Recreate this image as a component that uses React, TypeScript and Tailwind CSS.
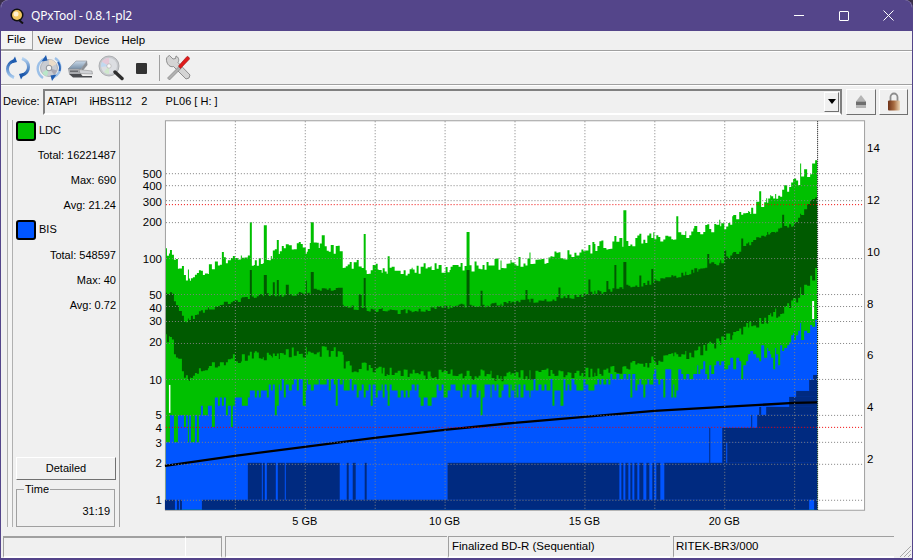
const FONT = "font-['Liberation_Sans','Arial',sans-serif]";

function rng(seed: number) {
  let a = seed;
  return () => {
    a |= 0; a = (a + 0x6d2b79f5) | 0;
    let t = Math.imul(a ^ (a >>> 15), 1 | a);
    t = (t + Math.imul(t ^ (t >>> 7), 61 | t)) ^ t;
    return ((t ^ (t >>> 14)) >>> 0) / 4294967296;
  };
}
const interp = (pts: number[][], x: number) => {
  for (let i = 1; i < pts.length; i++) {
    if (x <= pts[i][0]) {
      const [x0, y0] = pts[i - 1], [x1, y1] = pts[i];
      return y0 + ((y1 - y0) * (x - x0)) / (x1 - x0 || 1);
    }
  }
  return pts[pts.length - 1][1];
};
const ly = (v: number) => 500 - Math.log10(v) * 121;

const envA = [[165,258],[172,260],[185,282],[200,278],[230,266],[260,266],[290,254],[341,254],[343,273],[400,277],[445,273],[500,270],[550,264],[600,252],[650,244],[700,236],[725,230],[760,212],[795,190],[808,178],[818,166]];
const envB = [[165,292],[170,292],[185,322],[200,312],[235,300],[270,295],[290,295],[341,287],[343,307],[400,312],[445,307],[500,304],[570,297],[640,285],[690,272],[725,260],[760,237],[795,224],[812,200],[818,195]];
const envC = [[165,337],[172,345],[185,378],[200,372],[230,358],[290,353],[341,352],[345,366],[400,372],[500,376],[600,372],[700,352],[760,322],[790,306],[815,276],[818,266]];
const envD = [[165,416],[182,416],[205,405],[235,396],[280,388],[340,380],[345,386],[400,390],[500,390],[550,386],[650,378],[725,364],[780,345],[810,322],[818,308]];

const r = rng(42);
type Col = { x: number; w: number; a: number; b: number; c: number; d: number };
const cols: Col[] = [];
for (let x = 166; x < 818; ) {
  const w = r() < 0.6 ? 2 : r() < 0.5 ? 1 : 3;
  let a = interp(envA, x) - r() * 12;
  let b = interp(envB, x) + (r() - 0.5) * 5;
  const c = interp(envC, x) + (r() - 0.5) * 12;
  let dv = Math.pow(10, (500 - (interp(envD, x) + (r() - 0.4) * 16)) / 121);
  if (r() < (x < 215 ? 0.3 : 0.1)) dv *= x < 215 ? 0.6 : 0.75;
  if (r() < 0.05) b -= 12;
  if (r() < 0.02) a -= 14;
  const d = ly(Math.max(3, Math.round(dv)));
  cols.push({ x, w, a, b, c, d });
  x += w;
}
for (const [sx, top, dark] of [[251,222,270],[265,225,275],[277,240,280],[313,222,272],[365,234,278],[467,232,270],[615,236,265],[625,210,262]]) {
  const col = cols.find((k) => k.x + k.w > sx);
  if (col) { col.a = top; col.b = dark; }
}
const path = (key: "a" | "b" | "c" | "d") => {
  let s = "M166 510";
  for (const k of cols) s += `V${k[key].toFixed(1)}H${k.x + k.w}`;
  return s + "V510Z";
};
const darkRects: number[][] = [
  [165,500,10,10],[177,500,2,10],[180,500,2,10],[202,500,608,10],[815,500,3,10],
  [248,463,14,37],[263,463,2,37],[267,463,9,37],[278,463,7,37],[286,463,54,37],
  [347,463,2,37],[353,463,3,37],[365,463,2,37],[448,463,172,37],[622,463,2,37],[626,463,3,37],[631,463,2,37],[635,463,3,37],[640,463,4,37],[647,463,3,37],[653,463,2,37],[657,463,4,37],[665,463,153,37],
  [710,443,1,20],[723,443,4,20],[728,443,90,20],
  [710,428,1,15],[723,428,95,15],
  [752,415,1,13],[758,415,60,13],
  [760,407,2,8],[767,407,51,8],
  [790,397,28,10],[797,391,21,6],[810,380,8,11],[814,375,4,5],
];
const hGrid = [500,400,300,200,100,50,40,30,20,10,5,3,2,1];
const leftLabels: [string, number][] = [["500",173],["400",185.5],["300",201],["200",221],["100",258],["50",294.5],["40",307],["30",321],["20",342],["10",379.5],["5",415],["4",428],["3",442.5],["2",463],["1",500]];
const speedPts = [[165,466],[235,456],[305,447],[375,438],[445,430],[515,423],[585,417],[655,411],[725,407],[795,403],[818,402.5]];

function Chart() {
  return (
    <svg viewBox="120 0 793 418" className={`w-[792px] h-[418px] shrink-0 ${FONT}`} style={{ overflow: "hidden" }}>
      <g transform="translate(0,-117)">
        <rect x="165.5" y="120.5" width="700" height="390" fill="#fff" stroke="#a0a0a0" />
        <path d={path("a")} fill="#00c000" />
        <path d={path("b")} fill="#005a00" />
        <path d={path("c")} fill="#00c000" />
        <path d={path("d")} fill="#0055ff" />
        <rect x="169" y="385" width="1.5" height="28" fill="#fff" />
        <rect x="813" y="301" width="2" height="18" fill="#fff" />
        {darkRects.map(([x, y, w, h], i) => <rect key={i} x={x} y={y} width={w} height={h} fill="#002a80" />)}
        <polyline points={speedPts.map((p) => p.join(",")).join(" ")} fill="none" stroke="#000" strokeWidth="2.4" />
        {hGrid.map((v) => {
          const y = Math.round(ly(v)) + 0.5;
          return <line key={v} x1="166" x2="865" y1={y} y2={y} stroke="#808080" strokeDasharray="1 2" />;
        })}
        <line x1="166" x2="865" y1="204.5" y2="204.5" stroke="#f00000" strokeDasharray="1 2" />
        <line x1="166" x2="865" y1="427.5" y2="427.5" stroke="#f00000" strokeDasharray="1 2" />
        {[235,305,375,445,515,585,655,725,795].map((x) => (
          <line key={x} x1={x + 0.5} x2={x + 0.5} y1="121" y2="510" stroke="#808080" strokeDasharray="1 2" />
        ))}
        <line x1="818.5" x2="818.5" y1="121" y2="510" stroke="#000" strokeDasharray="1 1" />
        <g fontSize="11.5" fill="#000" textAnchor="end">
          {leftLabels.map(([t, y]) => <text key={t} x="162" y={y + 4.5}>{t}</text>)}
        </g>
        <g fontSize="11.5" fill="#000">
          {[["14",147],["12",199],["10",251],["8",303],["6",355],["4",407],["2",459]].map(([t, y]) => (
            <text key={t} x="868" y={(y as number) + 4.5}>{t}</text>
          ))}
        </g>
        <g fontSize="11" fill="#000" textAnchor="middle">
          {[["5 GB",305],["10 GB",445],["15 GB",585],["20 GB",725]].map(([t, x]) => (
            <text key={t} x={x} y="525">{t}</text>
          ))}
        </g>
      </g>
    </svg>
  );
}

function Refresh() {
  return (
    <svg width="26" height="26" viewBox="0 0 26 26" fill="none">
      <defs>
        <linearGradient id="rfL" x1="0" y1="0" x2="0" y2="1"><stop offset="0" stopColor="#1f5cb0" /><stop offset="1" stopColor="#a8cbef" /></linearGradient>
        <linearGradient id="rfR" x1="0" y1="0" x2="0" y2="1"><stop offset="0" stopColor="#b4d2f0" /><stop offset="1" stopColor="#1c58ac" /></linearGradient>
      </defs>
      <path d="M9 5.5C4.500 7.500 2.500 11 2.500 14c0 4 2.500 7 6.500 8.500" stroke="url(#rfL)" strokeWidth="3" />
      <path d="M17 20.500C21.500 18.500 23.500 15 23.500 12c0-4-2.500-7-6.500-8.500" stroke="url(#rfR)" strokeWidth="3" />
      <path d="M10 1.500l2 5.500-6 1.500z" fill="#1f5cb0" />
      <path d="M16 24.500l-2-5.500 6-1.500z" fill="#1c58ac" />
    </svg>
  );
}
function DiscRefresh() {
  return (
    <svg width="26" height="26" viewBox="0 0 26 26" fill="none">
      <circle cx="13" cy="13" r="8.500" fill="#c9ccd2" stroke="#9a9ea6" strokeWidth=".7" />
      <path d="M13 4.500a8.500 8.500 0 0 1 7.500 4.500L13 13z" fill="#ecdcc8" />
      <path d="M6 18a8.500 8.500 0 0 0 5 3.300L13 13z" fill="#b8e6c8" />
      <path d="M18 19.500a8.500 8.500 0 0 0 3-4L13 13z" fill="#a8a8b4" />
      <circle cx="13" cy="13" r="2.800" fill="#f4f4f4" stroke="#777b83" strokeWidth=".8" />
      <path d="M9 3.500C3.500 5.500 .8 11 2 16c.7 3 2.500 5.500 5 7" stroke="#9cc0e8" strokeWidth="2.400" />
      <path d="M17 22.500c5.500-2 8.200-7.500 7-12.500-.7-3-2.500-5.500-5-7" stroke="#9cc0e8" strokeWidth="2.400" />
      <path d="M10 0l1.500 5.500-6 1z" fill="#1f5cb0" />
      <path d="M16 26l-1.500-5.500 6-1z" fill="#1f5cb0" />
      <path d="M22 7c2 3 2.400 6 1.500 9" stroke="#2f68b8" strokeWidth="2" />
    </svg>
  );
}
function Drive() {
  return (
    <svg width="26" height="26" viewBox="0 0 26 26">
      <defs>
        <linearGradient id="drT" x1="0" y1="0" x2="0" y2="1"><stop offset="0" stopColor="#c8d8e8" /><stop offset="1" stopColor="#7890a8" /></linearGradient>
      </defs>
      <path d="M1 14 9 6h11l-6 8z" fill="url(#drT)" stroke="#8a8e94" strokeWidth=".6" />
      <path d="M1 14h13v5H2z" fill="#a8aaae" />
      <path d="M14 14l6-8 .5 4-5 6z" fill="#8a8e94" />
      <path d="M12 14.500l13 1.500.5 3-12.500-.5z" fill="#d0d2d6" stroke="#808080" strokeWidth=".5" />
      <path d="M2 19h12l1.500 2H25v1.500H6z" fill="#4a4c50" />
      <rect x="3" y="15.500" width="8" height="1.500" fill="#6a6c70" />
    </svg>
  );
}
function Magnifier() {
  return (
    <svg width="26" height="26" viewBox="0 0 26 26">
      <circle cx="11" cy="11" r="10" fill="#c6c8cc" stroke="#a0a2a6" strokeWidth=".8" />
      <circle cx="11" cy="11" r="8" fill="#dcdee2" />
      <path d="M11 3a8 8 0 0 0-7 4l7 4z" fill="#e6c8d8" />
      <path d="M4 7a8 8 0 0 0-1 5l8-1z" fill="#c0d8f0" />
      <path d="M11 11l-5 6a8 8 0 0 0 5 2z" fill="#cfe8cc" />
      <circle cx="11" cy="11" r="2.200" fill="#f8f8f8" stroke="#aaa" strokeWidth=".6" />
      <path d="M17 17l7 6.500" stroke="#2e2e2e" strokeWidth="3.400" strokeLinecap="round" />
    </svg>
  );
}
function Tools() {
  return (
    <svg width="26" height="26" viewBox="0 0 26 26" fill="none">
      <path d="M1.500 5.500c-.5-2 .5-4 3-5L8 4l2.500-.5.500-2.500c2.500 1 3.500 4 2 6.500L25 20l-1 3-3 1L8.500 11.500C5 12.500 2 9.500 1.500 5.500z" fill="#d4d4d4" stroke="#7a7a7a" strokeWidth=".8" />
      <path d="M2.500 23 14 11.500l2 2L4.500 25z" fill="#b0b0b0" stroke="#787878" strokeWidth=".6" />
      <path d="M13.500 11 22 1.500c1-.5 2.500 1 2.500 2.500L15.500 13.500z" fill="#e01c1c" stroke="#a01010" strokeWidth=".6" />
    </svg>
  );
}
function Eject() {
  return (
    <svg width="14" height="16" viewBox="0 0 14 16">
      <path d="M7 1l5 6.500H2z" fill="#b4b4b4" />
      <rect x="2" y="7.500" width="10" height="3.500" fill="#6e6e6e" />
      <rect x="2" y="11" width="10" height="3" fill="#b4b4b4" />
    </svg>
  );
}
function Lock() {
  return (
    <svg width="14" height="19" viewBox="0 0 14 19" fill="none">
      <defs>
        <linearGradient id="lk" x1="0" y1="0" x2="1" y2="0"><stop offset="0" stopColor="#6e3218" /><stop offset=".5" stopColor="#a86c40" /><stop offset="1" stopColor="#ecd8b8" /></linearGradient>
      </defs>
      <path d="M3.500 9V5a3.500 3.500 0 0 1 7 0v4" stroke="#8c8c8c" strokeWidth="1.800" />
      <rect x="1" y="8.500" width="12" height="10" rx="1" fill="url(#lk)" />
    </svg>
  );
}

function Stat({ text, h }: { text: string; h: string }) {
  return <div className={`flex items-center justify-end pr-[3px] ${h}`}>{text}</div>;
}
function Legend({ color, label }: { color: string; label: string }) {
  return (
    <div className="flex items-center gap-[3px] h-[21px]">
      <span className={`w-[20px] h-[20px] rounded-[3px] border-2 border-black ${color}`} />
      <span>{label}</span>
    </div>
  );
}
const raised = "border border-t-white border-l-white border-r-[#707070] border-b-[#707070] bg-[#f0f0f0]";

export default function App() {
  return (
    <div className="w-[913px] h-[560px] bg-[#3a2f4a] overflow-hidden">
      <div className={`w-full h-full rounded-t-[8px] overflow-hidden flex flex-col bg-[#f0f0f0] border-x border-b-2 border-[#54458a] text-[11px] leading-none text-black ${FONT}`}>
        <div className="h-[31px] shrink-0 bg-[#54458a] text-white flex items-center">
          <svg width="15" height="16" viewBox="0 0 15 16" className="ml-[9px] mr-[6px]">
            <circle cx="7" cy="7" r="6.500" fill="#111" />
            <circle cx="7" cy="7" r="5" fill="#f2c860" />
            <circle cx="6" cy="6" r="2.500" fill="#fff2d0" />
            <path d="M9 12l4 3.500" stroke="#111" strokeWidth="2" />
          </svg>
          <span className="text-[12px] font-['Noto_Sans',sans-serif] tracking-[-0.2px]">QPxTool - 0.8.1-pl2</span>
          <div className="ml-auto flex items-center h-full">
            <div className="w-[45px] flex justify-center"><span className="w-[10px] h-px bg-white" /></div>
            <div className="w-[45px] flex justify-center"><span className="w-[10px] h-[10px] border border-white rounded-[1px]" /></div>
            <div className="w-[45px] flex justify-center mr-[1px]">
              <svg width="11" height="11" viewBox="0 0 11 11" stroke="#fff"><path d="M.5.5l10 10M10.5.5l-10 10" /></svg>
            </div>
          </div>
        </div>

        <div className="h-[20px] shrink-0 flex items-center border-b border-[#a0a0a0] text-[11.5px]">
          <span className="h-[19px] px-[6px] ml-[0px] flex items-center border-r border-b border-[#a0a0a0] bg-[#f4f4f4]">File</span>
          <span className="px-[6px] ml-[-1px] pl-[6px]">View</span>
          <span className="px-[6px]">Device</span>
          <span className="px-[6px]">Help</span>
        </div>

        <div className="h-[34px] shrink-0 flex items-center border-t border-t-white border-b border-b-[#a0a0a0] pl-[4px]">
          <div className="flex items-center gap-[5px]">
            <Refresh /><DiscRefresh /><Drive /><Magnifier />
          </div>
          <div className="w-[24px] ml-[5px] flex justify-center"><span className="w-[11px] h-[11px] bg-[#333] rounded-[1px]" /></div>
          <span className="w-px h-[26px] bg-[#a0a0a0] ml-[6px] mr-[5px]" />
          <Tools />
        </div>

        <div className="h-[32px] shrink-0 flex items-center border-t border-t-white pl-[2px]">
          <span className="w-[40px]">Device:</span>
          <div className="w-[799px] h-[26px] flex items-center justify-between border-2 border-t-[#808080] border-l-[#808080] border-r-[#808080] border-b-white bg-[#f0f0f0] pl-[2px] pr-[1px]">
            <span className="whitespace-pre">ATAPI    iHBS112   2      PL06 [ H: ]</span>
            <span className={`w-[15px] h-[20px] flex items-center justify-center ${raised}`}>
              <span className="w-0 h-0 border-x-[4px] border-x-transparent border-t-[5px] border-t-black" />
            </span>
          </div>
          <div className={`w-[30px] h-[26px] ml-[4px] flex items-center justify-center ${raised}`}><Eject /></div>
          <div className={`w-[29px] h-[26px] ml-[3px] flex items-center justify-center ${raised}`}><Lock /></div>
        </div>

        <div className="h-[418px] shrink-0 flex items-stretch">
          <div className="w-[119px] shrink-0 flex pt-[3px] pb-[8px]">
            <div className="w-[6px] ml-[6px] border-x border-[#b0b0b0] bg-[#f4f4f4]" />
            <div className="flex-1 flex flex-col pl-[3px] border-r border-[#a0a0a0]">
              <Legend color="bg-[#00c000]" label="LDC" />
              <Stat h="h-[25px] mt-[2px]" text="Total: 16221487" />
              <Stat h="h-[25px]" text="Max: 690" />
              <Stat h="h-[25px]" text="Avg: 21.24" />
              <div className="mt-[1px]"><Legend color="bg-[#0055ff]" label="BIS" /></div>
              <Stat h="h-[25px] mt-[3px]" text="Total: 548597" />
              <Stat h="h-[25px]" text="Max: 40" />
              <Stat h="h-[25px]" text="Avg: 0.72" />
              <div className="flex-1" />
              <div className={`w-[100px] h-[23px] flex items-center justify-center ${raised}`}>Detailed</div>
              <div className="relative w-[99px] h-[38px] mt-[9px] border border-[#a0a0a0] flex items-end justify-end pr-[4px] pb-[9px]">
                <span className="absolute -top-[6px] left-[7px] bg-[#f0f0f0] px-[1px]">Time</span>
                31:19
              </div>
            </div>
          </div>
          <Chart />
        </div>

        <div className="flex-1 flex items-stretch mt-[1px] pl-[2px] pr-0">
          <div className="w-[183px] border-t-2 border-l border-[#a0a0a0] border-b-2 border-b-white border-r border-r-white" />
          <div className="w-[36px] border-t-2 border-[#a0a0a0] border-r border-b-2 border-b-white" />
          <div className="w-[222px] ml-[3px] border-t border-l border-[#a0a0a0] border-b-2 border-b-white" />
          <div className="w-[222px] ml-[1px] border-t border-l border-[#a0a0a0] border-b-2 border-b-white flex items-center pl-[3px] text-[11.5px]">Finalized BD-R (Sequential)</div>
          <div className="w-[221px] ml-[3px] border-t border-l border-[#a0a0a0] border-b-2 border-b-white flex items-center pl-[2px] text-[11.5px]">RITEK-BR3/000</div>
          <div className="flex-1 flex items-end justify-end">
            <svg width="14" height="14" viewBox="0 0 14 14" stroke="#a8a8a8"><path d="M13 2 2 13M13 6l-7 7M13 10l-3 3" /></svg>
          </div>
        </div>
      </div>
    </div>
  );
}
